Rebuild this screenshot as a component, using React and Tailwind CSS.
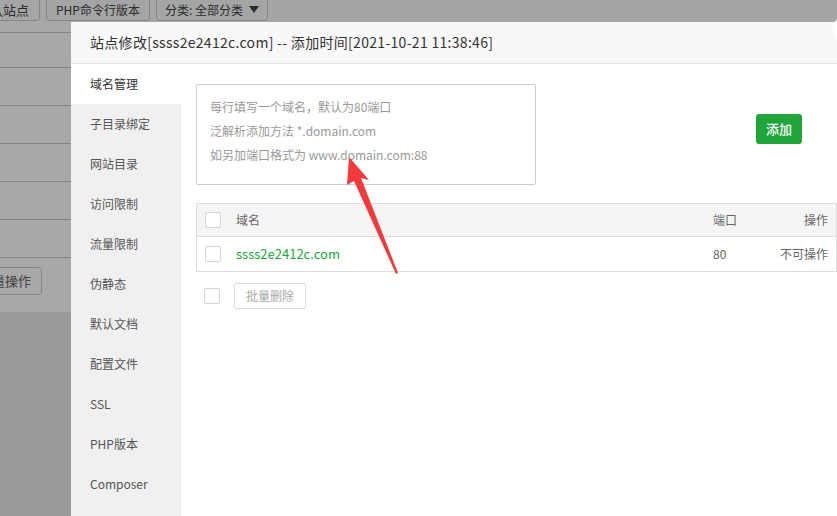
import React from "react";

const menu = [
  "域名管理",
  "子目录绑定",
  "网站目录",
  "访问限制",
  "流量限制",
  "伪静态",
  "默认文档",
  "配置文件",
  "SSL",
  "PHP版本",
  "Composer",
];

function Checkbox() {
  return <span className="block w-4 h-4 border border-[#d5d5d5] rounded-[2px] bg-white" />;
}

export default function App() {
  return (
    <div
      className="relative w-[837px] h-[516px] overflow-hidden bg-white text-[#333]"
      style={{ fontFamily: '"Noto Sans CJK SC", "Noto Sans", sans-serif' }}
    >
      {/* Page behind the dialog */}
      <div className="flex flex-col h-full">
        <div className="flex items-start gap-[6px] h-[24px] -mt-[3px] bg-[#fafafa]">
          <div className="h-[24px] -ml-[34px] px-[10px] border border-[#ccc] rounded-[3px] text-[13px] leading-[23px] text-[#444]">
            默认站点
          </div>
          <div className="h-[24px] px-[9px] border border-[#ccc] rounded-[3px] text-[12px] leading-[23px] text-[#444]">
            PHP命令行版本
          </div>
          <div className="h-[24px] px-[8px] border border-[#ccc] rounded-[3px] text-[12px] leading-[23px] text-[#444] flex items-center gap-[6px]">
            分类: 全部分类
            <span className="w-0 h-0 border-l-[5px] border-r-[5px] border-t-[7px] border-l-transparent border-r-transparent border-t-[#444]" />
          </div>
        </div>
        <div className="h-[11px]" />
        <div className="border-t border-[#ccc] h-[35px]" />
        {[0, 1, 2, 3, 4].map((i) => (
          <div key={i} className="border-t border-[#ccc] h-[38px]" />
        ))}
        <div className="border-t border-[#ccc] h-[55px] pt-[9px]">
          <div className="inline-block h-[28px] -ml-[19px] px-[10px] border border-[#ccc] rounded-[3px] text-[13px] leading-[26px] text-[#666]">
            量操作
          </div>
        </div>
        <div className="flex-1 bg-[#e8e8e8]" />
      </div>

      {/* Shade */}
      <div className="absolute inset-0 bg-black/[0.34]" />

      {/* Dialog */}
      <div className="absolute left-[71px] top-[22px] right-0 bottom-0 bg-white flex flex-col">
        <div className="h-[42px] shrink-0 bg-[#f8f8f8] border-b border-[#e5e5e5] flex items-center pl-[19px] text-[14px] tracking-[0.3px] text-[#333]">
          站点修改[ssss2e2412c.com] -- 添加时间[2021-10-21 11:38:46]
        </div>
        <div className="flex flex-1">
          <div className="w-[110px] shrink-0 bg-[#f0f0f0]">
            {menu.map((m, i) => (
              <div
                key={m}
                className={`h-[40px] flex items-center pl-[19px] text-[12px] ${
                  i === 0 ? "bg-white text-[#333]" : "text-[#555]"
                }`}
              >
                {m}
              </div>
            ))}
          </div>
          <div className="flex-1 pt-[20px] pl-[15px]">
            <div className="flex items-start">
              <div className="w-[340px] h-[101px] border border-[#ccc] rounded-[2px] pl-[13px] pt-[10px] text-[12px] leading-[24px] text-[#999]">
                <div>每行填写一个域名，默认为80端口</div>
                <div>泛解析添加方法 *.domain.com</div>
                <div>如另加端口格式为 www.domain.com:88</div>
              </div>
              <div className="flex-1 flex justify-end pr-[35px] pt-[30px]">
                <button className="h-[30px] w-[46px] rounded-[3px] bg-[#20a53a] text-white text-[13px] font-medium">
                  添加
                </button>
              </div>
            </div>

            <div className="mt-[18px] border border-[#ddd] text-[12px]">
              <div className="h-[33px] bg-[#f5f5f5] border-b border-[#ddd] flex items-center">
                <div className="w-[39px] pl-[8px]">
                  <Checkbox />
                </div>
                <div className="flex-1 text-[#666]">域名</div>
                <div className="w-[63px] text-[#666]">端口</div>
                <div className="w-[60px] text-right pr-[8px] text-[#666]">操作</div>
              </div>
              <div className="h-[34px] flex items-center">
                <div className="w-[39px] pl-[8px]">
                  <Checkbox />
                </div>
                <div className="flex-1 text-[#20a53a] text-[13px]">ssss2e2412c.com</div>
                <div className="w-[63px] text-[#666]">80</div>
                <div className="w-[60px] text-right pr-[8px] text-[#666]">不可操作</div>
              </div>
            </div>

            <div className="mt-[11px] flex items-center gap-[14px] pl-[8px]">
              <Checkbox />
              <div className="h-[26px] px-[11px] border border-[#ddd] rounded-[2px] text-[12px] leading-[24px] text-[#aaa]">
                批量删除
              </div>
            </div>
          </div>
        </div>
      </div>

      {/* Close button peeking at the corner */}
      <div className="absolute top-[15px] right-[-24px] w-[28px] h-[28px] rounded-full bg-white" />

      {/* Red annotation arrow */}
      <svg className="absolute left-0 top-0 pointer-events-none" width="837" height="516">
        <polygon points="349,157 369,180 361,178 398,273 396,274 354,181 347,185" fill="#f23a3a" />
      </svg>
    </div>
  );
}
